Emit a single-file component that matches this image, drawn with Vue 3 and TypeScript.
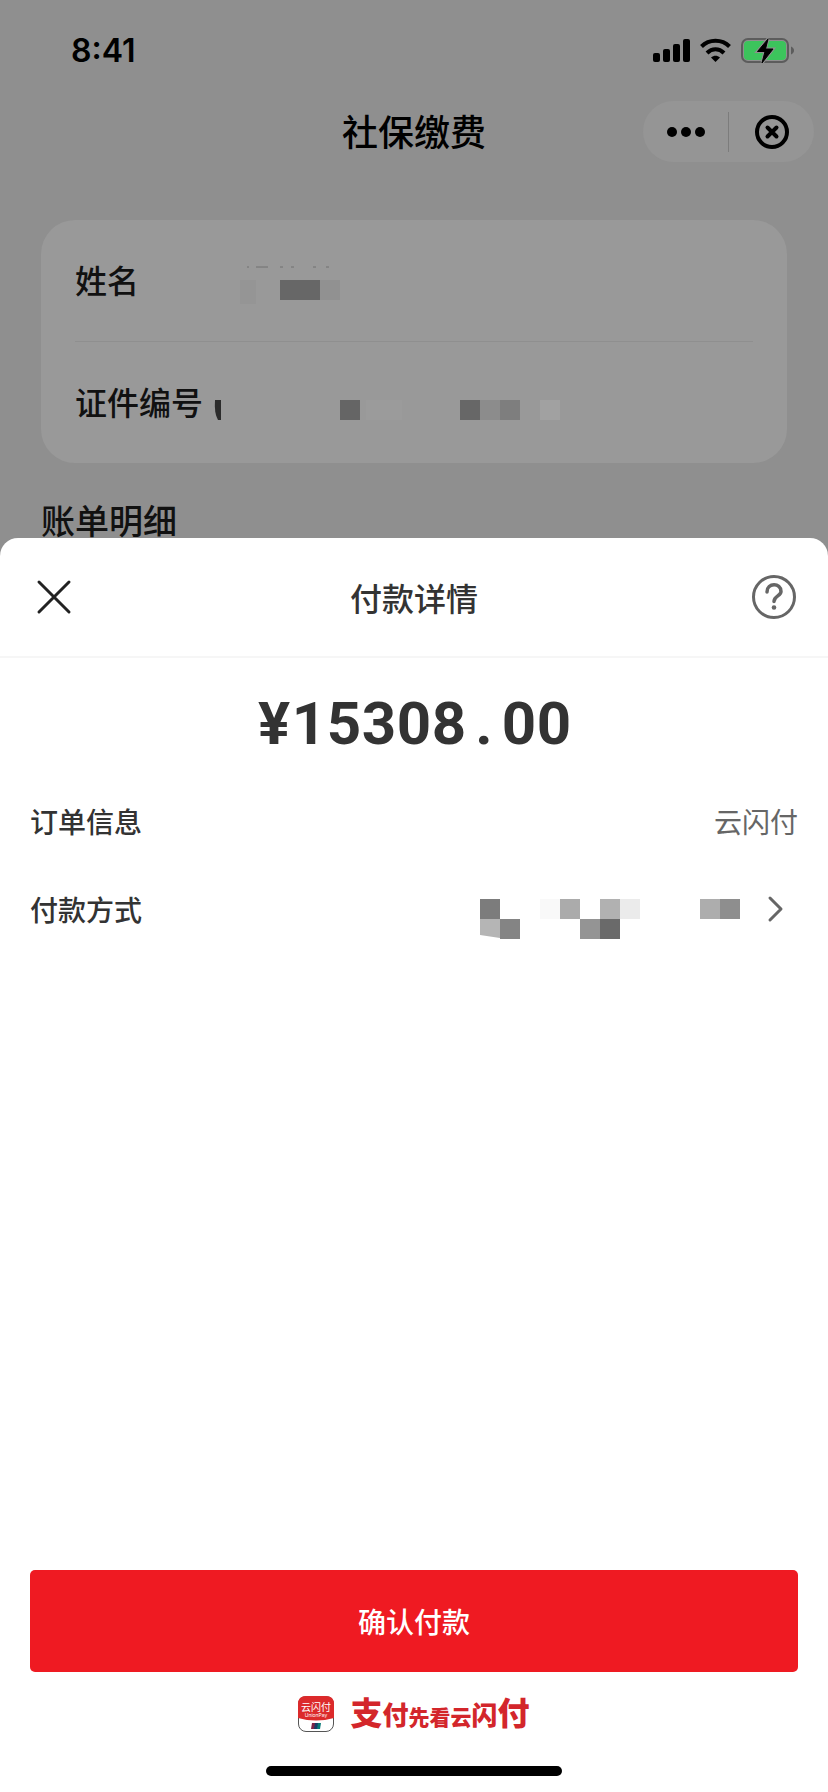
<script setup lang="ts">
interface Cell {
  x: number
  y: number
  w: number
  h: number
  fill: string
}

const amount = '¥15308.00'

const nameMask: Cell[] = [
  { x: 10, y: 23, w: 16, h: 24, fill: '#959595' },
  { x: 50, y: 23, w: 40, h: 20, fill: '#676767' },
  { x: 90, y: 23, w: 20, h: 20, fill: '#919191' },
]

const idMask: Cell[] = [
  { x: 130, y: 21, w: 20, h: 20, fill: '#656565' },
  { x: 156, y: 21, w: 36, h: 20, fill: '#9b9b9b' },
  { x: 250, y: 21, w: 20, h: 20, fill: '#676767' },
  { x: 270, y: 21, w: 20, h: 20, fill: '#8c8c8c' },
  { x: 290, y: 21, w: 20, h: 20, fill: '#7e7e7e' },
  { x: 330, y: 21, w: 20, h: 20, fill: '#a1a1a1' },
]

const cardMask: Cell[] = [
  { x: 0, y: 20, w: 20, h: 20, fill: '#7c7c7c' },
  { x: 20, y: 40, w: 20, h: 20, fill: '#848484' },
  { x: 60, y: 20, w: 20, h: 20, fill: '#f9f9f9' },
  { x: 80, y: 20, w: 20, h: 20, fill: '#ababab' },
  { x: 120, y: 20, w: 20, h: 20, fill: '#b1b1b1' },
  { x: 140, y: 20, w: 20, h: 20, fill: '#ebebeb' },
  { x: 100, y: 40, w: 20, h: 20, fill: '#949494' },
  { x: 120, y: 40, w: 20, h: 20, fill: '#6a6a6a' },
  { x: 220, y: 20, w: 20, h: 20, fill: '#adadad' },
  { x: 240, y: 20, w: 20, h: 20, fill: '#8e8e8e' },
]
</script>

<template>
  <div class="screen">
    <div class="status">
      <span class="clock">8:41</span>
      <svg class="indicators" width="142" height="30" viewBox="0 0 142 30" aria-hidden="true">
        <rect x="0" y="17" width="7" height="9" rx="2" />
        <rect x="10" y="13" width="7" height="13" rx="2" />
        <rect x="20" y="8" width="7" height="18" rx="2" />
        <rect x="30" y="3" width="7" height="23" rx="2" />
        <g fill="none" stroke="#000" stroke-width="4">
          <path d="M48.5 10.5C56 2.8 69 2.8 76.500 10.500" />
          <path d="M54 17C59 12 66 12 71 17" />
        </g>
        <path d="M58 21.500C61 19 64 19 67 21.500L62.500 26Z" />
        <rect x="89" y="3" width="46" height="23" rx="6" fill="#8f8f8f" stroke="#5c5c5c" stroke-width="2" />
        <rect x="91" y="5" width="42" height="19" rx="4" fill="#3cc45c" />
        <path d="M138 10.500C142 12 142 17 138 18.500Z" fill="#5c5c5c" />
        <path d="M115 3L104.500 15.500H112L109 27L120 13H112.500Z" stroke="#8f8f8f" stroke-width="3" />
        <path d="M115 3L104.500 15.500H112L109 27L120 13H112.500Z" stroke="#000" stroke-width="1" stroke-linejoin="round" />
      </svg>
    </div>

    <header class="nav">
      <h1>社保缴费</h1>
      <div class="capsule">
        <button type="button" class="capsule-btn more" aria-label="更多">
          <svg width="40" height="12" viewBox="0 0 40 12" aria-hidden="true">
            <circle cx="6" cy="6" r="5" /><circle cx="20" cy="6" r="5" /><circle cx="34" cy="6" r="5" />
          </svg>
        </button>
        <button type="button" class="capsule-btn" aria-label="关闭小程序">
          <svg width="36" height="36" viewBox="0 0 36 36" fill="none" stroke="#000" stroke-width="4" aria-hidden="true">
            <circle cx="18" cy="18" r="15" />
            <path d="M13.500 13.500L22.500 22.500M22.500 13.500L13.500 22.500" stroke-linecap="round" />
          </svg>
        </button>
      </div>
    </header>

    <section class="person">
      <div class="person-row">
        <span class="label">姓名</span>
        <svg class="name-mask" width="120" height="48" viewBox="0 0 120 48" aria-hidden="true">
          <rect v-for="(c, i) in nameMask" :key="i" :x="c.x" :y="c.y" :width="c.w" :height="c.h" :fill="c.fill" />
          <path d="M17 10h2M26 10h12M50 10h3M61 10h3M83 10h3M96 10h3" stroke="#707070" stroke-width="1" />
        </svg>
      </div>
      <div class="person-row">
        <span class="label">证件编号</span>
        <svg width="360" height="48" viewBox="0 0 360 48" aria-hidden="true">
          <path d="M5 21H11V41H8Q4 34 5 21Z" fill="#2c2c2c" />
          <rect v-for="(c, i) in idMask" :key="i" :x="c.x" :y="c.y" :width="c.w" :height="c.h" :fill="c.fill" />
        </svg>
      </div>
    </section>

    <h2 class="bill-title">账单明细</h2>

    <main class="sheet">
      <header class="sheet-head">
        <button type="button" class="icon-btn" aria-label="关闭">
          <svg width="48" height="48" viewBox="0 0 48 48" aria-hidden="true">
            <path d="M9 9L39 39M39 9L9 39" stroke="#222" stroke-width="3" stroke-linecap="round" />
          </svg>
        </button>
        <h2>付款详情</h2>
        <button type="button" class="icon-btn" aria-label="帮助">
          <svg width="48" height="48" viewBox="0 0 48 48" fill="none" stroke="#666" aria-hidden="true">
            <circle cx="24" cy="24" r="20.500" stroke-width="3" />
            <path d="M17 19C17 9.500 31 9.500 31 18.500C31 23 24 23 24 28.500" stroke-width="3.500" stroke-linecap="round" />
            <circle cx="24" cy="34.500" r="2.300" fill="#666" stroke="none" />
          </svg>
        </button>
      </header>

      <p class="amount"><span v-for="(ch, i) in amount" :key="i">{{ ch }}</span></p>

      <div class="row">
        <span class="row-label">订单信息</span>
        <span class="value">云闪付</span>
      </div>
      <button type="button" class="row">
        <span class="row-label">付款方式</span>
        <span class="method">
          <svg width="260" height="60" viewBox="0 0 260 60" aria-hidden="true">
            <path d="M0 40H20V59L0 56Z" fill="#b5b5b5" />
            <rect v-for="(c, i) in cardMask" :key="i" :x="c.x" :y="c.y" :width="c.w" :height="c.h" :fill="c.fill" />
          </svg>
          <svg width="48" height="48" viewBox="0 0 48 48" aria-hidden="true">
            <path d="M20 13L31 24L20 35" fill="none" stroke="#666" stroke-width="3" stroke-linecap="round" stroke-linejoin="round" />
          </svg>
        </span>
      </button>

      <button type="button" class="confirm">确认付款</button>

      <footer class="brand">
        <svg width="36" height="36" viewBox="0 0 36 36" aria-hidden="true">
          <rect x="0.500" y="0.500" width="35" height="35" rx="7.500" fill="#fff" stroke="#555" />
          <path d="M0 8Q0 0 8 0H28Q36 0 36 8V22Q18 27 0 22Z" fill="#dc2a2b" />
          <text class="logo-name" x="18" y="15" text-anchor="middle">云闪付</text>
          <text class="logo-sub" x="18" y="21" text-anchor="middle">UnionPay</text>
          <path d="M14 27H18L17 33H13Z" fill="#7c2448" />
          <path d="M17 27H21L20 33H16Z" fill="#193d68" />
          <path d="M20 27H23L22 33H19Z" fill="#087b77" />
        </svg>
        <p class="slogan"><span class="big">支</span><span class="mid">付</span><span class="small">先看云</span><span class="mid">闪</span><span class="big">付</span></p>
      </footer>
      <div class="home-bar"></div>
    </main>
  </div>
</template>

<style>
body {
  margin: 0;
  background: #8f8f8f;
}
</style>

<style scoped>
.screen {
  display: flex;
  flex-direction: column;
  min-height: 100vh;
  background: #8f8f8f;
  color: #111;
  font-family: "Noto Sans CJK SC", sans-serif;
}
h1, h2, p {
  margin: 0;
}
svg {
  display: block;
  flex: none;
}
button {
  margin: 0;
  padding: 0;
  border: 0;
  background: none;
  color: inherit;
  font: inherit;
  cursor: pointer;
}
.status {
  display: flex;
  align-items: center;
  justify-content: space-between;
  height: 101px;
  padding: 0 33px 0 71px;
}
.clock {
  color: #000;
  font: 600 32px/40px Inter, sans-serif;
}
.nav {
  display: grid;
  grid-template-columns: 1fr auto 1fr;
  align-items: start;
  padding-right: 14px;
  padding-left: 14px;
}
.nav h1 {
  grid-column: 2;
  color: #000;
  font-size: 36px;
  font-weight: 500;
  line-height: 58px;
}
.capsule {
  display: flex;
  align-items: center;
  justify-self: end;
  width: 171px;
  height: 61px;
  border-radius: 31px;
  background: #959595;
}
.capsule-btn {
  display: flex;
  flex: 1;
  align-items: center;
  justify-content: center;
  height: 40px;
}
.more {
  border-right: 1px solid #7c7c7c;
}
.person {
  margin: 58px 41px 0;
  padding: 0 34px;
  border-radius: 34px;
  background: #999;
}
.person-row {
  display: flex;
  align-items: center;
  height: 121px;
}
.person-row + .person-row {
  border-top: 1px solid #8f8f8f;
}
.label {
  padding-bottom: 4px;
  font-size: 32px;
  font-weight: 500;
  line-height: 48px;
}
.person-row svg {
  margin-left: 7px;
}
.person-row .name-mask {
  margin-left: 91px;
}
.bill-title {
  height: 38px;
  margin: 37px 41px 0;
  font-size: 34px;
  font-weight: 500;
  line-height: 40px;
}
.sheet {
  display: flex;
  flex: 1;
  flex-direction: column;
  border-radius: 18px 18px 0 0;
  background: #fff;
  color: #333;
}
.sheet-head {
  display: flex;
  align-items: center;
  justify-content: space-between;
  height: 118px;
  padding: 0 30px;
  border-bottom: 2px solid #f6f6f6;
}
.sheet-head h2 {
  font-size: 32px;
  font-weight: 500;
  line-height: 48px;
}
.amount {
  display: flex;
  justify-content: center;
  margin: 31px 0 18px;
  font: 700 60px/70px Roboto, sans-serif;
}
.amount span {
  width: 35px;
  text-align: center;
}
.row {
  display: flex;
  align-items: center;
  justify-content: space-between;
  height: 88px;
  padding: 0 30px;
  font-size: 28px;
  line-height: 40px;
}
.row-label {
  font-weight: 500;
}
.value {
  color: #666;
}
.method {
  display: flex;
  align-items: center;
  gap: 10px;
}
.confirm {
  height: 102px;
  margin: auto 30px 0;
  border-radius: 5px;
  background: #ef1a22;
  color: #fff;
  font-size: 28px;
  font-weight: 500;
}
.brand {
  display: flex;
  align-items: center;
  justify-content: center;
  gap: 16px;
  height: 84px;
}
.logo-name {
  fill: #fff;
  font-size: 10px;
}
.logo-sub {
  fill: #fff;
  font-family: Inter, sans-serif;
  font-size: 5px;
}
.slogan {
  color: #d3262b;
  font-weight: 900;
  line-height: 40px;
}
.big {
  font-size: 32px;
}
.mid {
  font-size: 26px;
}
.small {
  font-size: 21px;
}
.home-bar {
  align-self: center;
  width: 296px;
  max-width: 60%;
  height: 10px;
  margin: 10px 0 16px;
  border-radius: 5px;
  background: #000;
}
</style>
